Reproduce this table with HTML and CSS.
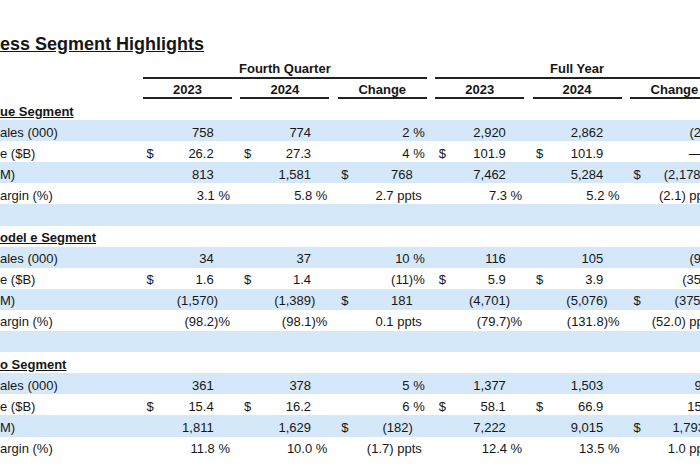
FILE: index.html
```html
<!DOCTYPE html>
<html lang="en">
<head>
<meta charset="utf-8">
<title>Business Segment Highlights</title>
<link rel="stylesheet" href="styles.css">
</head>
<body>
<div class="sheet">
  <h1 class="title">ess Segment Highlights</h1>

  <div class="hrow h1row">
    <div class="lbl"></div>
    <div class="span3">Fourth Quarter</div>
    <div class="span3">Full Year</div>
  </div>
  <div class="hrow h2row">
    <div class="lbl"></div>
    <div class="hc">2023</div>
    <div class="hc">2024</div>
    <div class="hc">Change</div>
    <div class="hc">2023</div>
    <div class="hc">2024</div>
    <div class="hc">Change</div>
  </div>

  <!-- Ford Blue -->
  <div class="row sec"><div class="lbl"><span class="sech">ue Segment</span></div></div>
  <div class="row blue">
    <div class="lbl">ales (000)</div>
    <div class="c"><span class="v pos">758</span></div>
    <div class="c"><span class="v pos">774</span></div>
    <div class="c"><span class="v pct">2 %</span></div>
    <div class="c"><span class="v pos">2,920</span></div>
    <div class="c"><span class="v pos">2,862</span></div>
    <div class="c"><span class="v pct">(2)%</span></div>
  </div>
  <div class="row">
    <div class="lbl">e ($B)</div>
    <div class="c"><span class="d">$</span><span class="v pos">26.2</span></div>
    <div class="c"><span class="d">$</span><span class="v pos">27.3</span></div>
    <div class="c"><span class="v pct">4 %</span></div>
    <div class="c"><span class="d">$</span><span class="v pos">101.9</span></div>
    <div class="c"><span class="d">$</span><span class="v pos">101.9</span></div>
    <div class="c"><span class="v pct">— %</span></div>
  </div>
  <div class="row blue">
    <div class="lbl">M)</div>
    <div class="c"><span class="v pos">813</span></div>
    <div class="c"><span class="v pos">1,581</span></div>
    <div class="c"><span class="d">$</span><span class="v chg">768</span></div>
    <div class="c"><span class="v pos">7,462</span></div>
    <div class="c"><span class="v pos">5,284</span></div>
    <div class="c"><span class="d">$</span><span class="v chg">(2,178)</span></div>
  </div>
  <div class="row">
    <div class="lbl">argin (%)</div>
    <div class="c"><span class="v pct">3.1 %</span></div>
    <div class="c"><span class="v pct">5.8 %</span></div>
    <div class="c"><span class="v ppt">2.7 ppts</span></div>
    <div class="c"><span class="v pct">7.3 %</span></div>
    <div class="c"><span class="v pct">5.2 %</span></div>
    <div class="c"><span class="v ppt">(2.1) ppts</span></div>
  </div>
  <div class="row blue"></div>

  <!-- Ford Model e -->
  <div class="row sec"><div class="lbl"><span class="sech">odel e Segment</span></div></div>
  <div class="row blue">
    <div class="lbl">ales (000)</div>
    <div class="c"><span class="v pos">34</span></div>
    <div class="c"><span class="v pos">37</span></div>
    <div class="c"><span class="v pct">10 %</span></div>
    <div class="c"><span class="v pos">116</span></div>
    <div class="c"><span class="v pos">105</span></div>
    <div class="c"><span class="v pct">(9)%</span></div>
  </div>
  <div class="row">
    <div class="lbl">e ($B)</div>
    <div class="c"><span class="d">$</span><span class="v pos">1.6</span></div>
    <div class="c"><span class="d">$</span><span class="v pos">1.4</span></div>
    <div class="c"><span class="v pct">(11)%</span></div>
    <div class="c"><span class="d">$</span><span class="v pos">5.9</span></div>
    <div class="c"><span class="d">$</span><span class="v pos">3.9</span></div>
    <div class="c"><span class="v pct">(35)%</span></div>
  </div>
  <div class="row blue">
    <div class="lbl">M)</div>
    <div class="c"><span class="v neg">(1,570)</span></div>
    <div class="c"><span class="v neg">(1,389)</span></div>
    <div class="c"><span class="d">$</span><span class="v chg">181</span></div>
    <div class="c"><span class="v neg">(4,701)</span></div>
    <div class="c"><span class="v neg">(5,076)</span></div>
    <div class="c"><span class="d">$</span><span class="v chg">(375)</span></div>
  </div>
  <div class="row">
    <div class="lbl">argin (%)</div>
    <div class="c"><span class="v pct">(98.2)%</span></div>
    <div class="c"><span class="v pct">(98.1)%</span></div>
    <div class="c"><span class="v ppt">0.1 ppts</span></div>
    <div class="c"><span class="v pct">(79.7)%</span></div>
    <div class="c"><span class="v pct">(131.8)%</span></div>
    <div class="c"><span class="v ppt">(52.0) ppts</span></div>
  </div>
  <div class="row blue"></div>

  <!-- Ford Pro -->
  <div class="row sec"><div class="lbl"><span class="sech">o Segment</span></div></div>
  <div class="row blue">
    <div class="lbl">ales (000)</div>
    <div class="c"><span class="v pos">361</span></div>
    <div class="c"><span class="v pos">378</span></div>
    <div class="c"><span class="v pct">5 %</span></div>
    <div class="c"><span class="v pos">1,377</span></div>
    <div class="c"><span class="v pos">1,503</span></div>
    <div class="c"><span class="v pct">9 %</span></div>
  </div>
  <div class="row">
    <div class="lbl">e ($B)</div>
    <div class="c"><span class="d">$</span><span class="v pos">15.4</span></div>
    <div class="c"><span class="d">$</span><span class="v pos">16.2</span></div>
    <div class="c"><span class="v pct">6 %</span></div>
    <div class="c"><span class="d">$</span><span class="v pos">58.1</span></div>
    <div class="c"><span class="d">$</span><span class="v pos">66.9</span></div>
    <div class="c"><span class="v pct">15 %</span></div>
  </div>
  <div class="row blue">
    <div class="lbl">M)</div>
    <div class="c"><span class="v pos">1,811</span></div>
    <div class="c"><span class="v pos">1,629</span></div>
    <div class="c"><span class="d">$</span><span class="v chg">(182)</span></div>
    <div class="c"><span class="v pos">7,222</span></div>
    <div class="c"><span class="v pos">9,015</span></div>
    <div class="c"><span class="d">$</span><span class="v chg">1,793</span></div>
  </div>
  <div class="row">
    <div class="lbl">argin (%)</div>
    <div class="c"><span class="v pct">11.8 %</span></div>
    <div class="c"><span class="v pct">10.0 %</span></div>
    <div class="c"><span class="v ppt">(1.7) ppts</span></div>
    <div class="c"><span class="v pct">12.4 %</span></div>
    <div class="c"><span class="v pct">13.5 %</span></div>
    <div class="c"><span class="v ppt">1.0 ppts</span></div>
  </div>
</div>
</body>
</html>
```

FILE: styles.css
```css
html, body {
  overflow: hidden;
}

body {
  margin: 0;
  background: #ffffff;
  color: #161616;
  font-family: "Liberation Sans", Arial, sans-serif;
  font-size: 13px;
}

.sheet {
  width: 720px;
}

.title {
  margin: 0;
  padding-top: 33px;
  height: 22px;
  font-size: 18px;
  line-height: 22px;
  font-weight: bold;
  text-decoration: underline;
  white-space: nowrap;
}

.hrow,
.row {
  display: flex;
  gap: 8.4px;
}

.lbl {
  flex: 0 0 134.6px;
  white-space: nowrap;
}

.h1row {
  padding-top: 6px;
  line-height: 15px;
}

.span3 {
  flex: 0 0 283.8px;
  text-align: center;
  font-weight: bold;
  padding-bottom: 1px;
  border-bottom: 2px solid #222;
}

.h2row {
  padding-top: 3px;
  line-height: 15px;
}

.hc {
  flex: 0 0 89px;
  text-align: center;
  font-weight: bold;
  border-bottom: 2px solid #222;
}

.row {
  height: 21.1px;
  box-sizing: border-box;
  padding-top: 4.5px;
  line-height: 15px;
}

.blue {
  background: #d4e8f9;
}

.sech {
  font-weight: bold;
  text-decoration: underline;
}

.c {
  flex: 0 0 89px;
  display: flex;
  white-space: nowrap;
}

.d {
  padding-left: 3.5px;
}

.v {
  margin-left: auto;
}

.pos { padding-right: 18.3px; }
.neg { padding-right: 14px; }
.pct { padding-right: 2px; }
.ppt { padding-right: 5px; }
.chg { padding-right: 14px; }
```
